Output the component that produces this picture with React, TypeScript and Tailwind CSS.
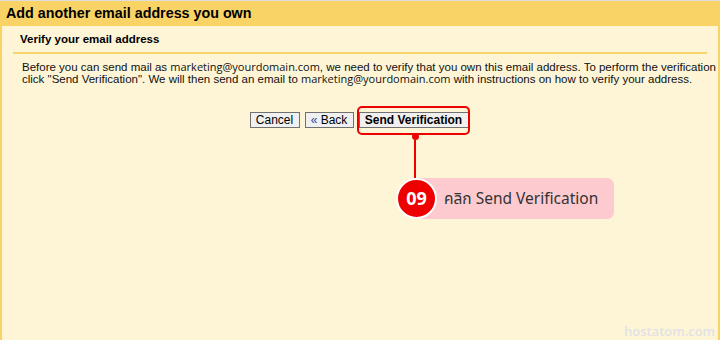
import React from 'react';

const Email: React.FC = () => (
  <span className="font-['Open_Sans',sans-serif] text-[11px]">
    marketing@yourdomain.com
  </span>
);

const App: React.FC = () => {
  return (
    <div className="relative w-[720px] h-[340px] overflow-hidden flex flex-col border-t border-[#dddddd] bg-[#fef5d7] font-['Liberation_Sans',Arial,sans-serif] text-black">
      {/* Header */}
      <div className="h-[25px] shrink-0 bg-[#f9d366] pl-[6px] pt-[4px] text-[14.3px] font-bold leading-[17px]">
        Add another email address you own
      </div>

      {/* Body */}
      <div className="flex-1 border-x-2 border-[#f9d366] bg-[#fef5d7]">
        <div className="ml-[11px] mr-[11px] mt-[6px] border-b-2 border-[#f7d46e] pb-[6px] pl-[7px] text-[11.5px] font-bold leading-[14px]">
          Verify your email address
        </div>

        <p className="ml-[20px] mr-0 mt-[7px] text-[11.5px] leading-[12px] text-[#111]">
          Before you can send mail as <Email />, we need to verify that you own this email address. To perform the verification click "Send Verification". We will then send an email to <Email /> with instructions on how to verify your address.
        </p>

        <div className="mt-[27px] flex justify-center gap-[5px] pr-[2px]">
          <button className="h-[16px] w-[50px] border border-[#707070] bg-[#f0f0f0] text-[12px] leading-[14px]">
            Cancel
          </button>
          <button className="h-[16px] w-[49px] border border-[#707070] bg-[#f0f0f0] text-[12px] leading-[14px]">
            <span className="text-[#2a4a9a]">«</span> Back
          </button>
          <button className="relative h-[16px] w-[110px] border border-[#707070] bg-[#f0f0f0] text-[12px] font-bold leading-[14px]">
            Send Verification
            <span className="pointer-events-none absolute -left-[3px] -right-[2px] -top-[7px] -bottom-[8px] rounded-[5px] border-2 border-[#ee0000]" />
          </button>
        </div>
      </div>

      {/* Callout */}
      <div className="absolute left-[396px] top-[132px] flex flex-col items-start">
        <div className="ml-[16px] h-[7px] w-[7px] rounded-full bg-[#ee0000]" />
        <div className="ml-[18px] h-[38px] w-[2px] bg-[#ee0000]" />
        <div className="relative flex items-center">
          <div className="z-10 flex h-[41px] w-[41px] items-center justify-center rounded-full border-2 border-white bg-[#ee0000] font-['Open_Sans',sans-serif] text-[18px] font-bold text-white">
            09
          </div>
          <div className="-ml-[19px] flex h-[41px] w-[196px] items-center rounded-r-[7px] bg-[#fdcbcf] pl-[26px] font-['Noto_Sans','Noto_Sans_Thai',sans-serif] text-[15.5px] text-[#333]">
            คลิก Send Verification
          </div>
        </div>
      </div>

      {/* Watermark */}
      <div className="absolute bottom-[1px] right-[5px] font-['Open_Sans',sans-serif] text-[13px] font-semibold leading-[16px] text-[#e2e2e6]">
        hostatom.com
      </div>
    </div>
  );
};

export default App;
